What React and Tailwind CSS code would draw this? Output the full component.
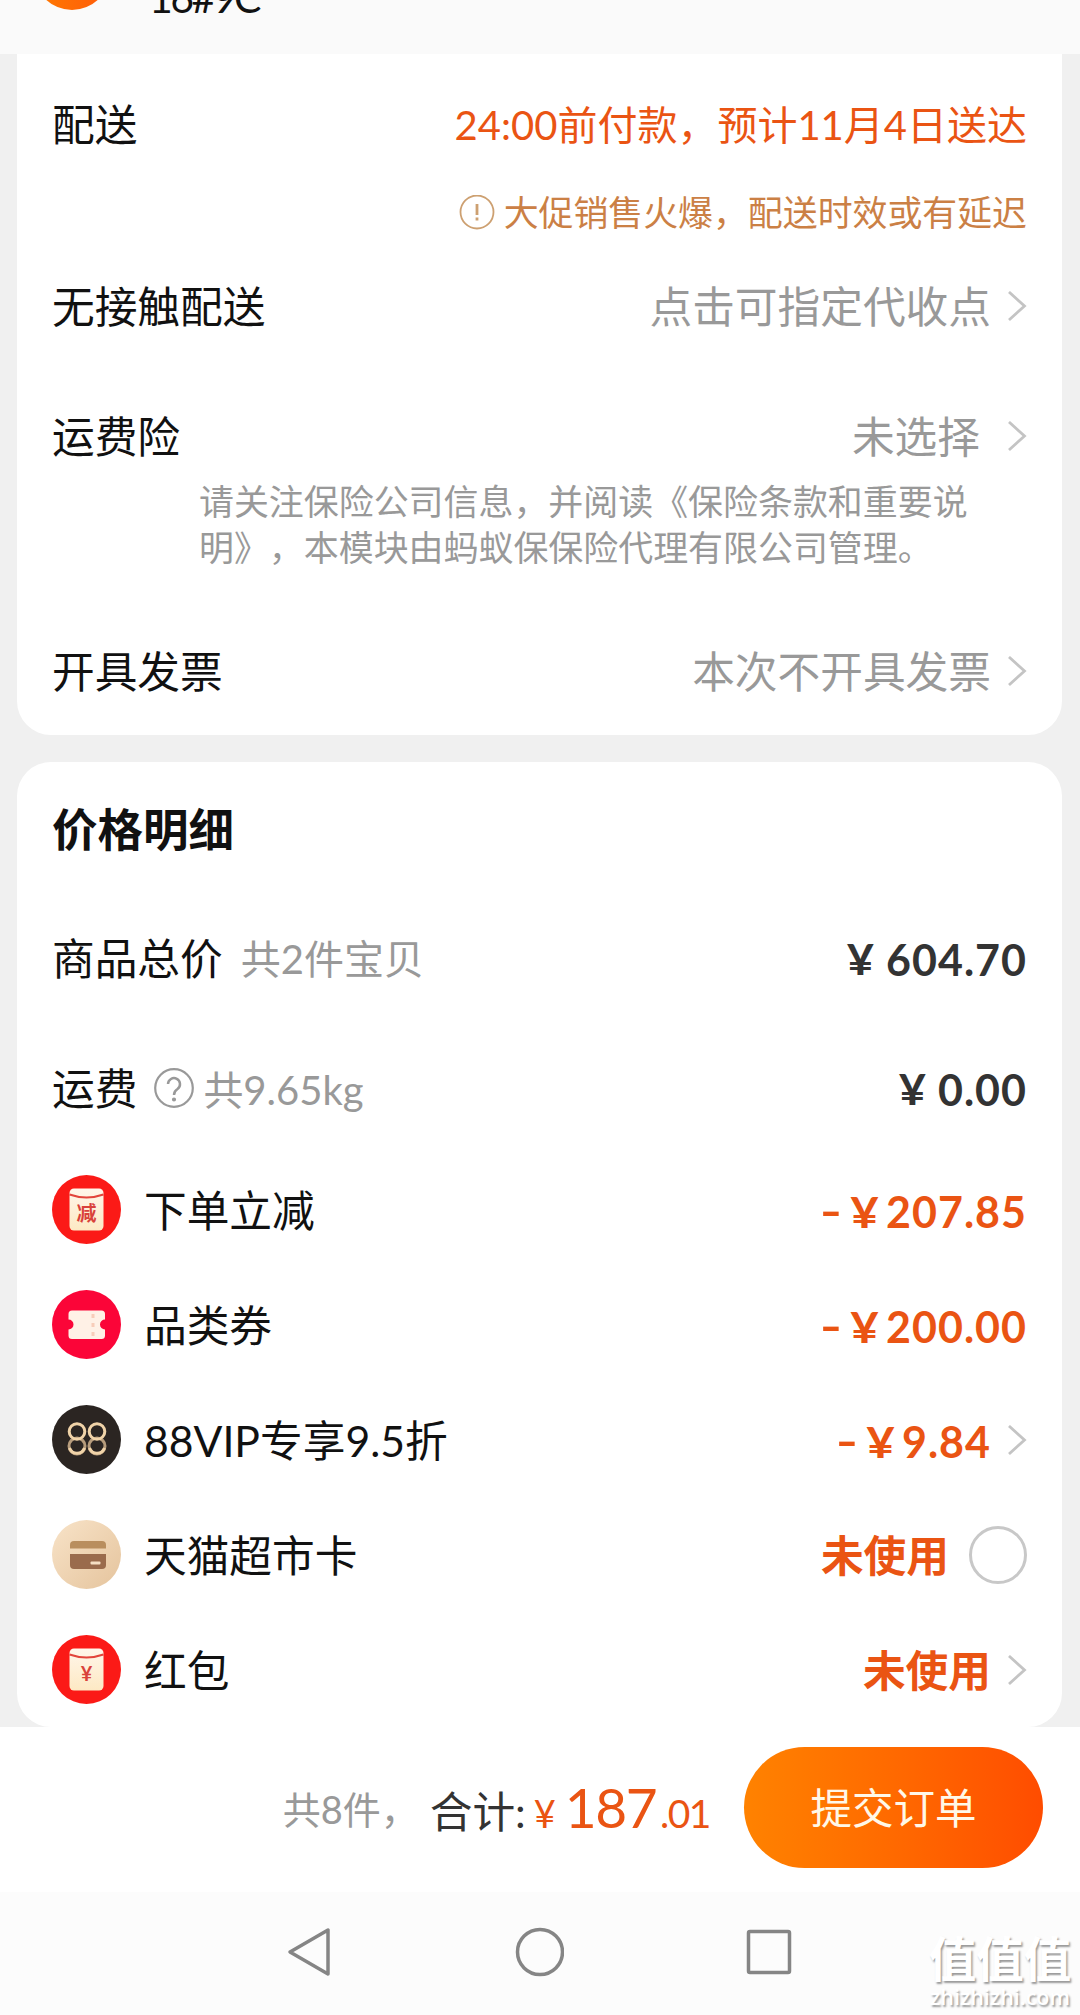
import React from "react";

const ORANGE = "text-[#ea5413]";

const Chevron = () => (
  <svg className="h-8 w-5 shrink-0" viewBox="0 0 20 32" fill="none" stroke="#c4c4c4" strokeWidth="2.8">
    <path d="M2 1 17.5 15 2 29" />
  </svg>
);

const EnvelopeIcon = ({ mark }) => (
  <svg className="h-[69px] w-[69px]" viewBox="0 0 69 69">
    <defs>
      <linearGradient id="paper" x1="0" y1="0" x2="0" y2="1">
        <stop offset="0" stopColor="#fff6ea" />
        <stop offset="1" stopColor="#fde9c4" />
      </linearGradient>
    </defs>
    <circle cx="34.5" cy="34.5" r="34.5" fill="#fb1a17" />
    <rect x="17.5" y="13.5" width="34" height="42" rx="4.5" fill="url(#paper)" />
    <path d="M17.5 19.5 Q34.5 25.5 51.5 19.5" fill="none" stroke="#e2453c" strokeWidth="2" />
    <text x="34.5" y="46" textAnchor="middle" fontSize="20" fontWeight="700" fill="#d9423b">{mark}</text>
  </svg>
);

const TicketIcon = () => (
  <svg className="h-[69px] w-[69px]" viewBox="0 0 69 69">
    <circle cx="34.5" cy="34.5" r="34.5" fill="#fb0538" />
    <path
      d="M20 20.5H49.5a3.5 3.5 0 0 1 3.5 3.5V29.5a5 5 0 0 0 0 10V45.5a3.5 3.5 0 0 1-3.5 3.5H20a3.5 3.5 0 0 1-3.5-3.5V39.5a5 5 0 0 0 0-10V24a3.5 3.5 0 0 1 3.5-3.5Z"
      fill="#fff1e6"
    />
    <path d="M41 24v4M41 33v4M41 42v4" stroke="#f8cdb9" strokeWidth="3" />
  </svg>
);

const VipIcon = () => (
  <svg className="h-[69px] w-[69px]" viewBox="0 0 69 69">
    <circle cx="34.5" cy="34.5" r="34.5" fill="#2b2522" />
    <g fill="none" stroke="#b79c7c" strokeWidth="3">
      <circle cx="25" cy="41" r="8" />
      <circle cx="45" cy="41" r="8" />
    </g>
    <g fill="none" stroke="#f0d3a8" strokeWidth="3">
      <circle cx="25" cy="26.5" r="7.8" />
      <circle cx="45" cy="26.5" r="7.8" />
      <path d="M17.5 43a8 8 0 0 0 15 0M37.500 43a8 8 0 0 0 15 0" />
    </g>
  </svg>
);

const CardIcon = () => (
  <svg className="h-[69px] w-[69px]" viewBox="0 0 69 69">
    <defs>
      <linearGradient id="cream" x1="0" y1="0" x2="1" y2="1">
        <stop offset="0" stopColor="#f8e3c8" />
        <stop offset="1" stopColor="#e5c49d" />
      </linearGradient>
    </defs>
    <circle cx="34.5" cy="34.5" r="34.5" fill="url(#cream)" />
    <path d="M18 28.5V25a4 4 0 0 1 4-4H50a4 4 0 0 1 4 4V28.5Z" fill="#b98e5e" />
    <path d="M18 34H54V45a4 4 0 0 1-4 4H22a4 4 0 0 1-4-4Z" fill="#9a6b4c" />
    <rect x="38.5" y="41.5" width="10" height="3" rx="1" fill="#f5dfc4" />
  </svg>
);

const promos = [
  { icon: <EnvelopeIcon mark="减" />, label: "下单立减", amount: "207.85" },
  { icon: <TicketIcon />, label: "品类券", amount: "200.00" },
  { icon: <VipIcon />, label: "88VIP专享9.5折", amount: "9.84", arrow: true },
  { icon: <CardIcon />, label: "天猫超市卡", radio: true },
  { icon: <EnvelopeIcon mark="¥" />, label: "红包", arrow: true },
];

const PromoRow = ({ icon, label, amount, arrow, radio }) => (
  <div className="flex h-[115px] items-center">
    {icon}
    <span className="ml-[23px] flex-1 pt-[3px]">{label}</span>
    <span className={`flex pt-[3px] font-bold ${ORANGE}`}>
      {amount ? (
        <>
          <span className="mr-[13px] scale-x-140">-</span>
          <span className="mr-[9px] scale-x-115 pt-px">¥</span>
          <span className="pt-px text-[43px] tracking-[1px]">{amount}</span>
        </>
      ) : (
        "未使用"
      )}
    </span>
    {arrow && <span className="ml-4 flex pt-[2px]"><Chevron /></span>}
    {radio && <span className="ml-5 h-[58px] w-[58px] rounded-full border-[3px] border-[#c8c8c8]" />}
  </div>
);

const App = () => {
  return (
    <div className="flex h-[2015px] w-[1080px] flex-col overflow-hidden bg-[#f0f0f0] font-['Lato','Noto_Sans_CJK_SC',sans-serif] text-[42.7px] leading-[50px] whitespace-nowrap text-[#111]">
      <header className="flex h-[54px] items-start overflow-hidden bg-[#fafafa] pl-[34px]">
        <div className="-mt-[66px] h-[76px] w-[76px] shrink-0 rounded-full bg-linear-to-r from-[#ff7a00] to-[#ff5a0a]" />
        <div className="-mt-[27px] ml-[39px] text-[41px] tracking-[-2.5px]">16#9C</div>
      </header>

      <section className="mr-[18px] ml-[17px] h-[681px] shrink-0 rounded-b-[34px] bg-white px-[35px] pt-[26px]">
        <div className="flex h-[90px] items-center justify-between">
          <span>配送</span>
          <span className={`text-[40px] ${ORANGE}`}>24:00前付款，预计11月4日送达</span>
        </div>
        <div className="flex h-[86px] items-center justify-end text-[34.9px] text-[#cb8045]">
          <svg className="mr-[9px] h-9 w-9" viewBox="0 0 36 36" fill="none" stroke="#cda071" strokeWidth="1.8">
            <circle cx="18" cy="17" r="16.5" />
            <path d="M18 9v11M18 22.5v3" strokeWidth="2.8" />
          </svg>
          大促销售火爆，配送时效或有延迟
        </div>
        <div className="flex h-[102px] items-center">
          <span className="flex-1">无接触配送</span>
          <span className="mr-4 text-[#999]">点击可指定代收点</span>
          <Chevron />
        </div>
        <div className="mt-[38px] flex h-[82px] items-center">
          <span className="flex-1">运费险</span>
          <span className="mr-[27px] text-[#999]">未选择</span>
          <Chevron />
        </div>
        <p className="ml-[147px] pt-px text-[34.95px] leading-[46px] text-[#999] [text-spacing-trim:space-all]">
          请关注保险公司信息，并阅读《保险条款和重要说
          <br />
          明》，本模块由蚂蚁保保险代理有限公司管理。
        </p>
        <div className="mt-[38px] flex h-[126px] items-center">
          <span className="flex-1">开具发票</span>
          <span className="mr-4 text-[#999]">本次不开具发票</span>
          <Chevron />
        </div>
      </section>

      <section className="mt-[27px] mr-[18px] ml-[17px] h-[965px] shrink-0 rounded-[34px] bg-white px-[35px]">
        <h2 className="flex h-[132px] items-center pt-[3px] text-[45.5px] font-bold">价格明细</h2>
        <div className="flex h-[130px] items-center">
          <span>商品总价</span>
          <span className="ml-[18px] flex-1 text-[40px] text-[#999]">共2件宝贝</span>
          <span className="mr-[13px] scale-x-110 font-bold text-[#333]">¥</span>
          <span className="pt-px text-[43px] font-bold tracking-[1px] text-[#333]">604.70</span>
        </div>
        <div className="flex h-[128px] items-center pt-[2px]">
          <span>运费</span>
          <svg className="ml-4 h-[42px] w-[42px]" viewBox="0 0 42 42" fill="none" stroke="#999" strokeWidth="2.2">
            <circle cx="21" cy="20" r="18.8" />
            <path d="M15 16a6 6 0 1 1 9.500 5q-3.500 2.300-3.500 6" strokeWidth="2.5" />
            <circle cx="21" cy="31.5" r="1" fill="#999" />
          </svg>
          <span className="ml-2 flex-1 pt-px text-[40px] text-[#999]">共9.65kg</span>
          <span className="mr-[13px] scale-x-110 font-bold text-[#333]">¥</span>
          <span className="pt-px text-[43px] font-bold tracking-[1px] text-[#333]">0.00</span>
        </div>
        {promos.map((p) => (
          <PromoRow key={p.label} {...p} />
        ))}
      </section>

      <footer className="flex h-[165px] shrink-0 items-start justify-end bg-white pt-5 pr-[37px]">
        <span className="mr-[11px] pt-[37px] text-[38px] text-[#999]">共8件，</span>
        <div className="mr-[34px] flex items-baseline pt-[35px]">
          <span className="text-[#333]">合计:</span>
          <span className={`ml-2 pt-1 text-[38px] ${ORANGE}`}>¥</span>
          <span className={`ml-[9px] text-[55px] tracking-[-1.5px] ${ORANGE}`}>187</span>
          <span className={`ml-1 text-[39px] tracking-[-1.5px] ${ORANGE}`}>.01</span>
        </div>
        <button className="h-[121px] w-[299px] rounded-full bg-linear-to-r from-[#ff8200] to-[#ff4c00] text-[41.5px] text-[#fff8e8]">
          提交订单
        </button>
      </footer>

      <nav className="relative h-[123px] shrink-0 bg-[#fcfcfc]">
        <div className="flex h-[120px] items-center gap-[180px] pl-[284px]">
          <svg className="h-[50px] w-[50px]" viewBox="0 0 50 50" fill="none" stroke="#858585" strokeWidth="3.5" strokeLinejoin="round">
            <path d="M44 3V47L6 25Z" />
          </svg>
          <svg className="h-[50px] w-[50px]" viewBox="0 0 50 50" fill="none" stroke="#858585" strokeWidth="3.5">
            <circle cx="26" cy="25" r="22.5" />
          </svg>
          <svg className="h-[50px] w-[50px]" viewBox="0 0 50 50" fill="none" stroke="#858585" strokeWidth="3.5">
            <rect x="4.5" y="4.5" width="41" height="41" rx="1.5" />
          </svg>
        </div>
        <div className="absolute top-[40px] right-[8px] flex w-[144px] flex-col items-center text-white [text-shadow:1.5px_1.5px_2px_#999]">
          <span className="text-[47.5px] leading-[54px] font-bold">值值值</span>
          <span className="font-['Open_Sans',sans-serif] text-[21.5px] leading-[22px] font-semibold">zhizhizhi.com</span>
        </div>
      </nav>
    </div>
  );
};

export default App;
